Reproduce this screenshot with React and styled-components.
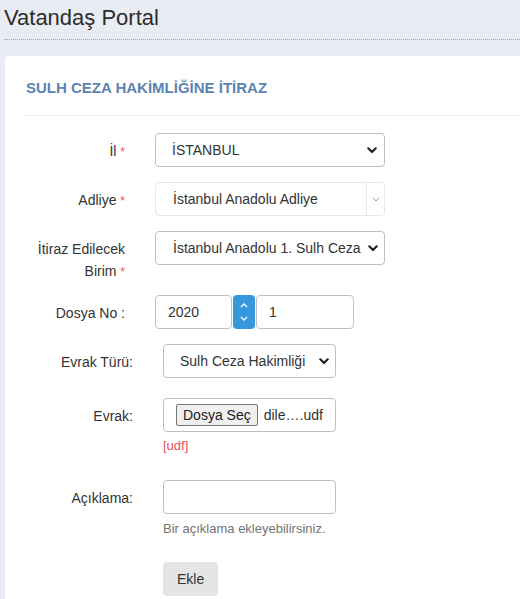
import React from "react";
import styled, { createGlobalStyle } from "styled-components";

const GlobalStyle = createGlobalStyle`
  html, body { margin: 0; padding: 0; background: #e9ecf3; }
  body {
    font-family: "Liberation Sans", Arial, sans-serif;
    color: #333;
    font-size: 14px;
    overflow: hidden;
  }
  * { box-sizing: border-box; }
`;

const PageHeader = styled.div`
  margin-left: 4px;
  padding: 3px 0 6px 0;
  border-bottom: 1px dotted #a3a6ad;
`;

const PageTitle = styled.h1`
  margin: 0;
  font-size: 22px;
  line-height: 30px;
  font-weight: 400;
  color: #2d2d2d;
`;

const Card = styled.div`
  margin: 16px 0 0 5px;
  background: #fff;
  border-radius: 4px 0 0 0;
  padding: 0 0 60px 20px;
`;

const CardHeader = styled.div`
  padding: 22px 0 17px 1px;
  border-bottom: 1px solid #eceef1;
`;

const CardTitle = styled.span`
  font-size: 15px;
  line-height: 20px;
  font-weight: 700;
  color: #5b84b2;
`;

const Form = styled.div`
  padding-top: 17px;
`;

const Row = styled.div`
  display: flex;
  align-items: flex-start;
  margin-bottom: ${(p) => p.$mb}px;
`;

const Label = styled.div`
  width: ${(p) => p.$w}px;
  flex-shrink: 0;
  margin-right: 30px;
  padding-top: 7px;
  line-height: 22px;
  text-align: right;
  font-size: 14px;
  color: #333;
`;

const Req = styled.span`
  color: #e7505a;
  font-size: 12px;
`;

const Field = styled.div`
  display: flex;
  flex-direction: column;
`;

const SelectBox = styled.div`
  width: ${(p) => p.$w}px;
  height: 34px;
  display: flex;
  align-items: center;
  background: #fff;
  border: 1px solid ${(p) => (p.$light ? "#e5e7ea" : "#bcc0c6")};
  border-radius: 4px;
  padding-left: ${(p) => p.$pl}px;
`;

const SelectText = styled.span`
  flex: 1;
  min-width: 0;
  overflow: hidden;
  white-space: nowrap;
  font-size: 14px;
  color: #333;
`;

const Arrow = styled.span`
  width: ${(p) => p.$w}px;
  flex-shrink: 0;
  display: flex;
  align-items: center;
  justify-content: center;
`;

const Select2Arrow = styled.span`
  align-self: stretch;
  width: 18px;
  flex-shrink: 0;
  border-left: 1px solid #e5e7ea;
  display: flex;
  align-items: center;
  justify-content: center;
`;

const NumberGroup = styled.div`
  display: flex;
  align-items: stretch;
  gap: 1px;
`;

const TextInput = styled.div`
  width: ${(p) => p.$w}px;
  height: 34px;
  border: 1px solid #bcc0c6;
  border-radius: 4px;
  padding: 0 12px;
  display: flex;
  align-items: center;
  font-size: 14px;
  color: #333;
  background: #fff;
`;

const Spinner = styled.div`
  width: 22px;
  height: 34px;
  background: #3598dc;
  border-radius: 4px;
  display: flex;
  flex-direction: column;
  align-items: center;
  justify-content: space-around;
  padding: 4px 0;
`;

const FileBox = styled.div`
  width: 173px;
  height: 34px;
  border: 1px solid #bcc0c6;
  border-radius: 4px;
  padding: 0 12px;
  display: flex;
  align-items: center;
  background: #fff;
`;

const FileButton = styled.span`
  height: 22px;
  padding: 0 6px;
  display: inline-flex;
  align-items: center;
  background: #efefef;
  border: 1px solid #767676;
  border-radius: 2px;
  font-size: 14px;
  color: #222;
`;

const FileName = styled.span`
  margin-left: 6px;
  font-size: 14px;
  color: #333;
  white-space: nowrap;
`;

const Hint = styled.div`
  margin-top: ${(p) => p.$mt}px;
  font-size: 13px;
  line-height: 18px;
  color: ${(p) => (p.$error ? "#e7505a" : "#737373")};
`;

const Button = styled.button`
  height: 34px;
  padding: 0 14px;
  border: none;
  border-radius: 4px;
  background: #e5e5e5;
  font-family: "Liberation Sans", Arial, sans-serif;
  font-size: 14px;
  color: #333;
`;

const BoldChevron = () => (
  <svg width="10" height="7" viewBox="0 0 10 7">
    <path d="M1.3 1.3 L5 5 L8.7 1.3" fill="none" stroke="#222" strokeWidth="2.2" strokeLinecap="round" strokeLinejoin="round" />
  </svg>
);

const ThinChevron = () => (
  <svg width="8" height="5" viewBox="0 0 8 5">
    <path d="M0.8 0.8 L4 4 L7.2 0.8" fill="none" stroke="#9a9a9a" strokeWidth="1" />
  </svg>
);

const SpinUp = () => (
  <svg width="8" height="5" viewBox="0 0 8 5">
    <path d="M1 4 L4 1 L7 4" fill="none" stroke="#fff" strokeWidth="1.3" />
  </svg>
);

const SpinDown = () => (
  <svg width="8" height="5" viewBox="0 0 8 5">
    <path d="M1 1 L4 4 L7 1" fill="none" stroke="#fff" strokeWidth="1.3" />
  </svg>
);

export default function App() {
  return (
    <>
      <GlobalStyle />
      <PageHeader>
        <PageTitle>Vatandaş Portal</PageTitle>
      </PageHeader>
      <Card>
        <CardHeader>
          <CardTitle>SULH CEZA HAKİMLİĞİNE İTİRAZ</CardTitle>
        </CardHeader>
        <Form>
          <Row $mb={15}>
            <Label $w={100}>
              İl <Req>*</Req>
            </Label>
            <SelectBox $w={230} $pl={16}>
              <SelectText>İSTANBUL</SelectText>
              <Arrow $w={24}>
                <BoldChevron />
              </Arrow>
            </SelectBox>
          </Row>
          <Row $mb={15}>
            <Label $w={100}>
              Adliye <Req>*</Req>
            </Label>
            <SelectBox $w={230} $pl={17} $light>
              <SelectText>İstanbul Anadolu Adliye</SelectText>
              <Select2Arrow>
                <ThinChevron />
              </Select2Arrow>
            </SelectBox>
          </Row>
          <Row $mb={12}>
            <Label $w={100}>
              İtiraz Edilecek Birim <Req>*</Req>
            </Label>
            <SelectBox $w={230} $pl={17}>
              <SelectText>İstanbul Anadolu 1. Sulh Ceza Hakimliği</SelectText>
              <Arrow $w={22}>
                <BoldChevron />
              </Arrow>
            </SelectBox>
          </Row>
          <Row $mb={15}>
            <Label $w={100}>Dosya No :</Label>
            <NumberGroup>
              <TextInput $w={77}>2020</TextInput>
              <Spinner>
                <SpinUp />
                <SpinDown />
              </Spinner>
              <TextInput $w={98}>1</TextInput>
            </NumberGroup>
          </Row>
          <Row $mb={20}>
            <Label $w={108}>Evrak Türü:</Label>
            <SelectBox $w={173} $pl={16}>
              <SelectText>Sulh Ceza Hakimliği</SelectText>
              <Arrow $w={22}>
                <BoldChevron />
              </Arrow>
            </SelectBox>
          </Row>
          <Row $mb={25}>
            <Label $w={108}>Evrak:</Label>
            <Field>
              <FileBox>
                <FileButton>Dosya Seç</FileButton>
                <FileName>dile….udf</FileName>
              </FileBox>
              <Hint $mt={5} $error>
                [udf]
              </Hint>
            </Field>
          </Row>
          <Row $mb={24}>
            <Label $w={108}>Açıklama:</Label>
            <Field>
              <TextInput $w={173} />
              <Hint $mt={6}>Bir açıklama ekleyebilirsiniz.</Hint>
            </Field>
          </Row>
          <Row $mb={0}>
            <Label $w={108} />
            <Button>Ekle</Button>
          </Row>
        </Form>
      </Card>
    </>
  );
}
